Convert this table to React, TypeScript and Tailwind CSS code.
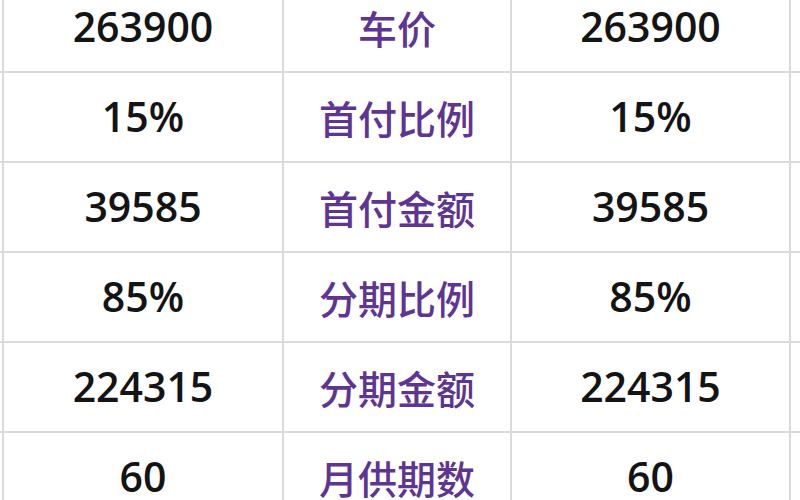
const rows = [
  { value: "263900", label: "车价" },
  { value: "15%", label: "首付比例" },
  { value: "39585", label: "首付金额" },
  { value: "85%", label: "分期比例" },
  { value: "224315", label: "分期金额" },
  { value: "60", label: "月供期数" },
];

export default function App() {
  return (
    <div className="w-[800px] h-[500px] overflow-hidden bg-white">
      <div className="-mt-[17px] flex flex-col">
        {rows.map((r) => (
          <div key={r.label} className="flex h-[90px] border-b-2 border-[#dadada]">
            <div className="w-[4px] border-r-2 border-[#dadada]" />
            <div className="w-[280px] flex items-center justify-center border-r-2 border-[#dadada] text-[41px] font-semibold text-[#141414] font-['Open_Sans',sans-serif]">
              {r.value}
            </div>
            <div className="w-[228px] flex items-center justify-center border-r-2 border-[#dadada] text-[39px] font-medium text-[#5e3592] font-['Noto_Sans_CJK_SC',sans-serif]">
              {r.label}
            </div>
            <div className="w-[279px] flex items-center justify-center border-r-2 border-[#dadada] text-[41px] font-semibold text-[#141414] font-['Open_Sans',sans-serif]">
              {r.value}
            </div>
            <div className="flex-1" />
          </div>
        ))}
      </div>
    </div>
  );
}
